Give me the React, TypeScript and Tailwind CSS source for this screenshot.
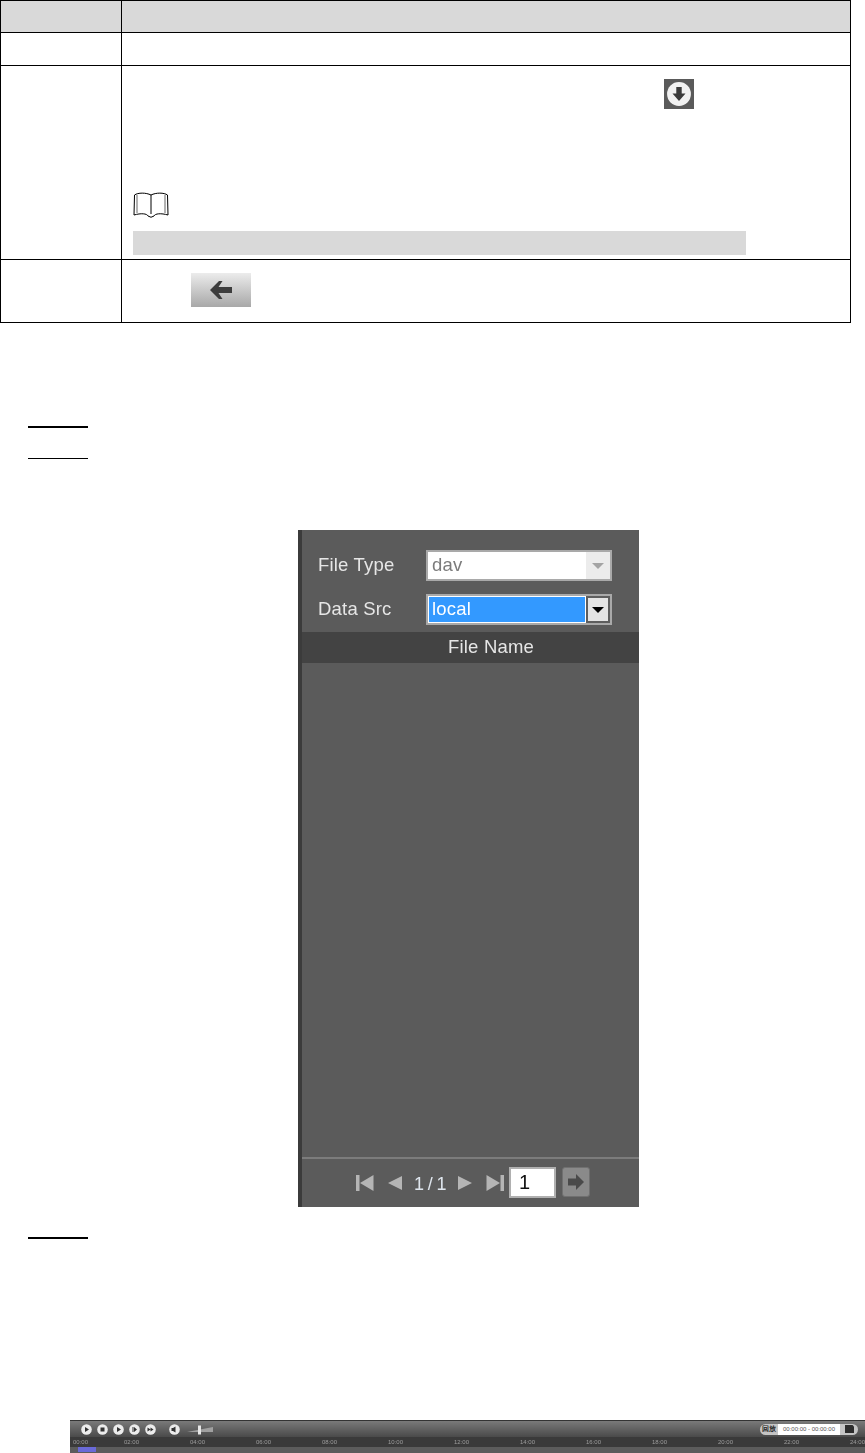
import React from "react";

const hours = ["02:00", "04:00", "06:00", "08:00", "10:00", "12:00", "14:00", "16:00", "18:00", "20:00", "22:00"];

const BookIcon = () => (
  <svg width="36" height="27" viewBox="0 0 36 27" fill="none" stroke="#000" strokeWidth="1">
    <path d="M1.5 3 C5 0.5 13 0.5 18 3 C23 0.5 31 0.5 34.5 3 L35 23 C28 21 22 21.5 21 24 Q18 26.5 15 24 C14 21.5 8 21 1 23 Z" />
    <path d="M18 3 L18 22" />
    <path d="M4 3 L4 21 M32 3 L32 21" strokeWidth="0.6" />
  </svg>
);

const CircleBtn = ({ glyph }: { glyph: string }) => (
  <svg width="11" height="11" viewBox="0 0 11 11">
    <circle cx="5.5" cy="5.5" r="5.3" fill="#ececec" />
    <path d={glyph} fill="#333" />
  </svg>
);

const Step = () => <div className="ml-[28px] w-[60px] h-[2px] bg-black" />;

export default function App() {
  return (
    <div className="w-[865px] h-[1453px] overflow-hidden bg-white flex flex-col font-['Liberation_Sans',sans-serif]">
      {/* table */}
      <div className="w-[851px] border border-black flex flex-col">
        <div className="flex h-[32px] bg-[#d9d9d9] border-b border-black">
          <div className="w-[121px] border-r border-black" />
          <div className="flex-1" />
        </div>
        <div className="flex h-[33px] border-b border-black">
          <div className="w-[121px] border-r border-black" />
          <div className="flex-1" />
        </div>
        <div className="flex h-[194px] border-b border-black">
          <div className="w-[121px] border-r border-black" />
          <div className="flex-1 flex flex-col pl-[11px]">
            <div className="ml-[531px] mt-[13px] w-[30px] h-[30px] bg-[#5a5a5a] flex items-center justify-center blur-[0.4px]">
              <svg width="26" height="26" viewBox="0 0 24 24">
                <circle cx="12" cy="12" r="11" fill="#f1f1f1" />
                <path d="M9.5 5.5 H14.5 V11.5 H18 L12 18.5 L6 11.5 H9.5 Z" fill="#3a3a3a" />
              </svg>
            </div>
            <div className="mt-[83px] h-[27px]">
              <BookIcon />
            </div>
            <div className="mt-[12px] w-[613px] h-[24px] bg-[#d9d9d9]" />
          </div>
        </div>
        <div className="flex h-[62px]">
          <div className="w-[121px] border-r border-black" />
          <div className="flex-1 pl-[69px] pt-[13px]">
            <div className="w-[60px] h-[34px] bg-gradient-to-b from-[#ececec] to-[#a8a8a8] flex items-center justify-center">
              <svg width="22" height="18" viewBox="0 0 22 18" className="blur-[0.4px]">
                <path d="M0 9 L9 0 H12.5 L8.5 6 H22 V12 H8.5 L12.5 18 H9 Z" fill="#3d3d3d" />
              </svg>
            </div>
          </div>
        </div>
      </div>

      <div className="mt-[103px]">
        <Step />
      </div>
      <div className="ml-[28px] mt-[30px] w-[60px] h-px bg-black" />

      {/* file panel */}
      <div className="mt-[71px] ml-[298px] w-[341px] h-[677px] bg-[#5b5b5b] border-l-4 border-[#3b3b3b] flex flex-col text-[18.5px] tracking-[0.2px] text-[#e6e6e6] blur-[0.3px]">
        <div className="flex items-center h-[31px] mt-[20px] pl-[16px]">
          <span className="w-[108px] pb-[2px]">File Type</span>
          <div className="w-[186px] h-[31px] border-2 border-[#a9a9a9] bg-white flex">
            <span className="flex-1 pl-[4px] leading-[25px] text-[#7b7b7b]">dav</span>
            <div className="w-[24px] bg-[#ececec] flex items-center justify-center">
              <div className="w-0 h-0 border-x-[6px] border-x-transparent border-t-[6px] border-t-[#a4a4a4]" />
            </div>
          </div>
        </div>
        <div className="flex items-center h-[31px] mt-[13px] pl-[16px]">
          <span className="w-[108px] pb-[2px]">Data Src</span>
          <div className="w-[186px] h-[31px] border-2 border-[#a9a9a9] bg-white flex">
            <span className="flex-1 m-[1px] pl-[3px] leading-[23px] bg-[#3399ff] text-white">local</span>
            <div className="w-[24px] bg-[#e4e4e4] border-2 border-[#5e5e5e] flex items-center justify-center">
              <div className="w-0 h-0 border-x-[6px] border-x-transparent border-t-[6px] border-t-black" />
            </div>
          </div>
        </div>
        <div className="mt-[7px] h-[31px] bg-[#434343] pl-[146px] leading-[30px]">File Name</div>
        <div className="flex-1" />
        <div className="h-[50px] border-t-2 border-[#7c7c7c] flex items-center pl-[54px] pb-[2px]">
          <svg width="18" height="18" viewBox="0 0 18 18" fill="#b5b5b5" className="mt-[2px]">
            <path d="M0 1 H3.5 V17 H0 Z M17.5 1 V17 L4 9 Z" />
          </svg>
          <svg width="16" height="16" viewBox="0 0 16 16" fill="#b5b5b5" className="ml-[13px] mt-[2px]">
            <path d="M15 1 V15 L1 8 Z" />
          </svg>
          <span className="ml-[11px] mt-[5px] w-[33px] text-[18px] tracking-[-0.6px] text-[#dfe6ee] whitespace-nowrap">1 / 1</span>
          <svg width="16" height="16" viewBox="0 0 16 16" fill="#b5b5b5" className="ml-[10px] mt-[2px]">
            <path d="M1 1 V15 L15 8 Z" />
          </svg>
          <svg width="18" height="18" viewBox="0 0 18 18" fill="#b5b5b5" className="ml-[13px] mt-[2px]">
            <path d="M0.5 1 V17 L14 9 Z M14.5 1 H18 V17 H14.5 Z" />
          </svg>
          <div className="ml-[5px] w-[47px] h-[31px] border-2 border-[#b0b0b0] bg-white pl-[8px] text-[20px] leading-[27px] text-[#111]">1</div>
          <div className="ml-[6px] w-[28px] h-[30px] rounded-[3px] bg-[#8a8a8a] border border-[#707070] flex items-center justify-center">
            <svg width="18" height="16" viewBox="0 0 18 16" fill="#4a4a4a">
              <path d="M1 4.5 H9 V0 L17 8 L9 16 V11.5 H1 Z" />
            </svg>
          </div>
        </div>
      </div>

      <div className="mt-[30px]">
        <Step />
      </div>

      {/* playback bar */}
      <div className="mt-[181px] ml-[70px] w-[795px] h-[33px] flex flex-col blur-[0.5px]">
        <div className="h-[17px] bg-gradient-to-b from-[#7a7a7a] to-[#4a4a4a] border-t border-[#333] flex items-center pl-[11px]">
          <div className="flex gap-[5px]">
            <CircleBtn glyph="M4 3 L8 5.5 L4 8 Z" />
            <CircleBtn glyph="M3.5 3.5 H7.5 V7.5 H3.5 Z" />
            <CircleBtn glyph="M4 3 L8 5.5 L4 8 Z" />
            <CircleBtn glyph="M3.5 3 H4.5 V8 H3.5 Z M5 3 L8 5.5 L5 8 Z" />
            <CircleBtn glyph="M2.5 3.5 L5.5 5.5 L2.5 7.5 Z M5.5 3.5 L8.5 5.5 L5.5 7.5 Z" />
          </div>
          <div className="ml-[13px]">
            <CircleBtn glyph="M2.5 4 H4 L6.5 2.5 V8.5 L4 7 H2.5 Z" />
          </div>
          <svg width="28" height="11" viewBox="0 0 28 11" className="ml-[6px]">
            <path d="M1 8 L27 3 V8 Z" fill="#a0a0a0" />
            <rect x="12" y="1.5" width="3" height="9" fill="#e6e6e6" />
          </svg>
          <div className="ml-auto mr-[7px] w-[98px] h-[11px] rounded-full bg-[#c4c4c4] flex items-center text-[6.5px] text-[#222] overflow-hidden">
            <span className="w-[18px] text-center font-bold">回放</span>
            <span className="w-[62px] h-full bg-white text-center leading-[11px] text-[6px] text-[#555] whitespace-nowrap">00:00:00 - 00:00:00</span>
            <span className="flex-1 flex justify-center">
              <svg width="9" height="8" viewBox="0 0 9 8" fill="#2c2c2c">
                <path d="M0 0 H7.5 L9 1.5 V8 H0 Z" />
              </svg>
            </span>
          </div>
        </div>
        <div className="h-[10px] bg-[#3a3a3a] flex items-center text-[6px] leading-none text-[#9c9c9c] pl-[3px] whitespace-nowrap">
          <span className="w-[59px]">00:00</span>
          {hours.map((h) => (
            <span key={h} className="w-[66px] shrink-0">
              {h}
            </span>
          ))}
          <span>24:00</span>
        </div>
        <div className="h-[6px] bg-[#5c5c5c] pl-[8px]">
          <div className="w-[18px] h-[5px] bg-[#6a6ad8]" />
        </div>
      </div>
    </div>
  );
}
